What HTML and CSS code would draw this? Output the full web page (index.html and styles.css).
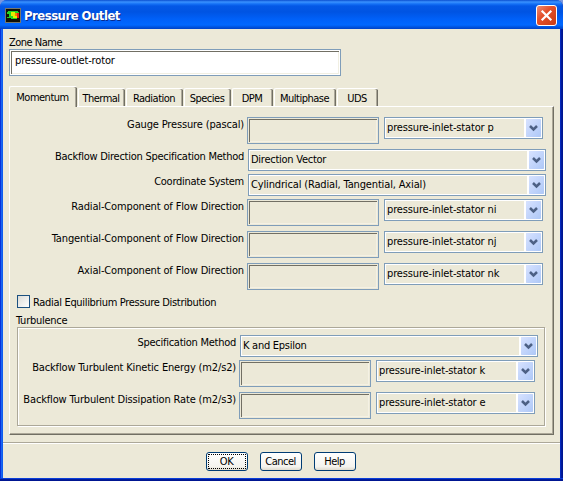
FILE: index.html
```
<!DOCTYPE html>
<html lang="en">
<head>
<meta charset="utf-8">
<title>Pressure Outlet</title>
<link rel="stylesheet" href="styles.css">
</head>
<body>
<svg class="defs" width="0" height="0" aria-hidden="true">
  <linearGradient id="arrow-bg" x1="0" y1="0" x2="1" y2="1"><stop offset="0" stop-color="#d7e2ff"/><stop offset="1" stop-color="#aec8f7"/></linearGradient>
  <symbol id="arrow" viewBox="0 0 15 18">
    <rect width="15" height="18" rx="1" fill="url(#arrow-bg)"/>
    <path d="M4 7l3.5 3.5L11 7" fill="none" stroke="#4d6185" stroke-width="2.5"/>
  </symbol>
</svg>
<div class="window">
  <header class="titlebar">
    <svg class="app-icon" width="16" height="15" viewBox="0 0 16 15" shape-rendering="crispEdges">
      <rect width="16" height="15" fill="#77776b"/><rect x="1" y="1" width="14" height="13" fill="#101008"/>
      <path d="M2 4l1-1h10v1h1v6h-2v1H6v-1H2z" fill="#20d820"/>
      <path d="M6 4h4v1h2v5H8V8H6z" fill="#dff000"/>
      <path d="M10 5h2v3h-2z" fill="#ff7a00"/><path d="M12 5h2v5h-2z" fill="#e82010"/>
      <path d="M1 6h3v3H1z" fill="#101008"/>
    </svg>
    <h1 class="title">Pressure Outlet</h1>
    <svg class="close" width="21" height="21" viewBox="0 0 21 21">
      <defs><linearGradient id="red" x1="0" y1="0" x2="1" y2="1"><stop offset="0" stop-color="#ee9078"/><stop offset=".4" stop-color="#e4512c"/><stop offset="1" stop-color="#c93a12"/></linearGradient></defs>
      <rect x=".5" y=".5" width="20" height="20" rx="2.5" fill="url(#red)" stroke="#fff"/>
      <path d="M5.7 5.7l9.6 9.6M15.3 5.7l-9.6 9.6" stroke="#fff" stroke-width="2.2"/>
    </svg>
  </header>
  <main class="body">
    <div class="zone-label"><span class="t tight">Zone Name</span></div>
    <div class="input zone"><span class="t">pressure-outlet-rotor</span></div>
    <nav class="tabs">
      <div class="tab active"><span class="t">Momentum</span></div>
      <div class="tab thermal"><span class="t">Thermal</span></div>
      <div class="tab radiation"><span class="t">Radiation</span></div>
      <div class="tab species"><span class="t">Species</span></div>
      <div class="tab dpm"><span class="t">DPM</span></div>
      <div class="tab multiphase"><span class="t">Multiphase</span></div>
      <div class="tab uds"><span class="t">UDS</span></div>
    </nav>
    <section class="panel">
      <div class="row"><div class="label"><span class="t">Gauge Pressure (pascal)</span></div><div class="input"></div><div class="combo"><span class="t">pressure-inlet-stator p</span><svg class="arrow"><use href="#arrow"/></svg></div></div>
      <div class="row short"><div class="label"><span class="t medium">Backflow Direction Specification Method</span></div><div class="combo wide"><span class="t medium">Direction Vector</span><svg class="arrow"><use href="#arrow"/></svg></div></div>
      <div class="row short"><div class="label"><span class="t medium">Coordinate System</span></div><div class="combo wide"><span class="t">Cylindrical (Radial, Tangential, Axial)</span><svg class="arrow"><use href="#arrow"/></svg></div></div>
      <div class="row"><div class="label"><span class="t">Radial-Component of Flow Direction</span></div><div class="input"></div><div class="combo"><span class="t">pressure-inlet-stator ni</span><svg class="arrow"><use href="#arrow"/></svg></div></div>
      <div class="row"><div class="label"><span class="t">Tangential-Component of Flow Direction</span></div><div class="input"></div><div class="combo"><span class="t">pressure-inlet-stator nj</span><svg class="arrow"><use href="#arrow"/></svg></div></div>
      <div class="row"><div class="label"><span class="t">Axial-Component of Flow Direction</span></div><div class="input"></div><div class="combo"><span class="t">pressure-inlet-stator nk</span><svg class="arrow"><use href="#arrow"/></svg></div></div>
      <div class="check-row"><div class="checkbox"></div><span class="t snug">Radial Equilibrium Pressure Distribution</span></div>
      <div class="group-title"><span class="t medium">Turbulence</span></div>
      <div class="group">
        <div class="row short"><div class="label"><span class="t medium">Specification Method</span></div><div class="combo wide"><span class="t medium">K and Epsilon</span><svg class="arrow"><use href="#arrow"/></svg></div></div>
        <div class="row"><div class="label"><span class="t">Backflow Turbulent Kinetic Energy (m2/s2)</span></div><div class="input"></div><div class="combo"><span class="t">pressure-inlet-stator k</span><svg class="arrow"><use href="#arrow"/></svg></div></div>
        <div class="row"><div class="label"><span class="t">Backflow Turbulent Dissipation Rate (m2/s3)</span></div><div class="input"></div><div class="combo"><span class="t">pressure-inlet-stator e</span><svg class="arrow"><use href="#arrow"/></svg></div></div>
      </div>
    </section>
    <footer class="footer">
      <div class="button focus"><span class="t">OK</span></div>
      <div class="button"><span class="t">Cancel</span></div>
      <div class="button"><span class="t">Help</span></div>
    </footer>
  </main>
</div>
</body>
</html>
```
FILE: styles.css
```
* { box-sizing: border-box; }
body { margin: 0; background: #7a97df; font: 11px/14px "DejaVu Sans Condensed", "DejaVu Sans", sans-serif; font-stretch: condensed; color: #000; }
.defs { position: absolute; }
.t { white-space: nowrap; letter-spacing: -0.15px; }
.medium { letter-spacing: -0.26px; }
.snug { letter-spacing: -0.32px; }
.tight, .tab .t, .button .t { letter-spacing: -0.5px; }
.window { width: 563px; height: 481px; border-radius: 7px 7px 0 0; overflow: hidden; background: linear-gradient(#0a3ed8 0, #0a3ed8 1px, #001ea0 1px, #00138c 3px) 0 478px no-repeat, linear-gradient(90deg, #0831d9 0, #0831d9 1px, #1e6bf2 1px, #0a57ee 3px, #0a57ee 560px, #0831d9 560px, #001ea0 561px, #00138c 563px); }
.titlebar { height: 29px; display: flex; align-items: center; padding: 2px 6px 0 5px; background: linear-gradient(#0b4fd0 0, #3a92ff 2px, #1470f5 4px, #0458e6 6px, #0054e3 12px, #0060f8 19px, #0168ff 25px, #0054e0 27px, #0042c6 29px); }
.title { margin: 0 auto 0 3px; font: bold 13px/16px "DejaVu Sans Condensed", "DejaVu Sans", sans-serif; font-stretch: condensed; letter-spacing: -0.52px; color: #fff; text-shadow: 1px 1px 0 #0a2a8c; }
.body { width: 557px; height: 449px; margin-left: 3px; background: #ece9d8; }
.zone-label { height: 20px; padding: 7px 0 0 6px; }
.input { width: 132px; height: 27px; flex: none; border: 1px solid #7f9db9; background: #ece9d8; box-shadow: inset 0 0 0 1px #ece9d8, inset 2px 2px #716f64, inset -2px -2px #f4f1e4; }
.zone { width: 332px; margin-left: 6px; padding: 4px 0 0 5px; background: #fff; box-shadow: inset 0 0 0 1px #fff, inset 2px 2px #716f64, inset -2px -2px #f1efe2; }
.tabs { height: 20px; margin: 10px 0 0 6px; display: flex; align-items: flex-end; }
.tab { height: 18px; display: flex; justify-content: center; padding: 3px 2px 0 0; border: 1px solid #fff; border-width: 1px 0 0 1px; border-radius: 2px 2px 0 0; box-shadow: inset -1px 0 #716f64, inset -2px 0 #aca899; margin-right: 1px; }
.tab.active { width: 68px; height: 21px; margin-bottom: -1px; padding-top: 4px; position: relative; background: #ece9d8; }
.thermal { width: 47px; } .radiation { width: 57px; } .species { width: 47px; } .dpm { width: 41px; } .multiphase { width: 62px; } .uds { width: 41px; }
.panel { width: 545px; height: 329px; margin-left: 6px; padding: 10px 0 0 7px; border: 1px solid #fff; border-right-color: #716f64; border-bottom-color: #716f64; box-shadow: inset -1px -1px #aca899; }
.row { height: 32px; display: flex; }
.short { height: 25px; }
.label { width: 227px; margin-right: 3px; padding-top: 1px; display: flex; justify-content: flex-end; }
.combo { width: 159px; height: 22px; margin-left: 5px; flex: none; display: flex; justify-content: space-between; align-items: center; border: 1px solid #7f9db9; box-shadow: inset 0 0 0 1px #fff; padding: 1px 1px 1px 2px; }
.combo.wide { width: 298px; margin-left: 1px; }
.arrow { width: 17px; height: 18px; border-left: 2px solid #fff; flex: none; }
.check-row { height: 18px; display: flex; gap: 3px; }
.check-row .t { padding-top: 1px; }
.checkbox { width: 13px; height: 13px; border: 1px solid #1c5180; background: linear-gradient(135deg, #dcdcd7, #fff); }
.group-title { height: 14px; margin-left: -1px; padding-top: 1px; }
.group { width: 528px; height: 99px; padding-top: 7px; border: 1px solid #aca899; box-shadow: inset 1px 1px #fff, 1px 1px #fff; }
.group .label { width: 218px; }
.footer { height: 36px; margin-top: 7px; padding: 9px 2px 0 0; border-top: 1px solid #aca899; box-shadow: inset 0 1px #fff; display: flex; justify-content: center; gap: 12px; }
.button { width: 42px; height: 19px; border: 1px solid #003c74; border-radius: 3px; background: linear-gradient(#fff, #f4f3ee 80%, #dfdbce); display: flex; justify-content: center; align-items: center; position: relative; }
.focus::after { content: ""; position: absolute; inset: 1px; border: 1px dotted #000; }
```
